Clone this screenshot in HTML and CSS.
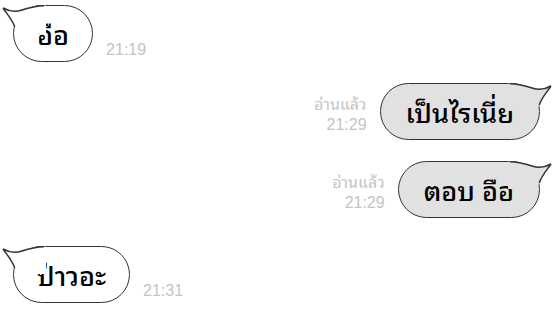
FILE: index.html
```html
<!DOCTYPE html>
<html lang="th">
<head>
    <meta charset="UTF-8">
    <meta name="viewport" content="width=device-width, initial-scale=1.0">
    <title>Chat</title>
    <link rel="stylesheet" href="styles.css">
</head>
<body>

    <main class="chat">

        <div class="row in">
            <div class="bubble">
                <svg class="tail" width="44" height="30" viewBox="0 0 44 30">
                    <path class="tail-fill" d="M42,0.8 C32,1 26,3 20,5 C14,7 8,7 1,3 C5,9 10,14 12.75,22 L16,28 L44,28 L44,0.8 Z"/>
                    <path class="tail-line" d="M42,0.8 C32,1 26,3 20,5 C14,7 8,7 1,3 C5,9 10,14 12.75,22"/>
                </svg>
                <p class="text">อือ</p>
            </div>
            <div class="meta">21:19</div>
        </div>

        <div class="row out">
            <div class="meta">อ่านแล้ว<br>21:29</div>
            <div class="bubble">
                <svg class="tail" width="44" height="30" viewBox="0 0 44 30">
                    <path class="tail-fill" d="M42,0.8 C32,1 26,3 20,5 C14,7 8,7 1,3 C5,9 10,14 12.75,22 L16,28 L44,28 L44,0.8 Z"/>
                    <path class="tail-line" d="M42,0.8 C32,1 26,3 20,5 C14,7 8,7 1,3 C5,9 10,14 12.75,22"/>
                </svg>
                <p class="text">เป็นไรเนี่ย</p>
            </div>
        </div>

        <div class="row out">
            <div class="meta">อ่านแล้ว<br>21:29</div>
            <div class="bubble">
                <svg class="tail" width="44" height="30" viewBox="0 0 44 30">
                    <path class="tail-fill" d="M42,0.8 C32,1 26,3 20,5 C14,7 8,7 1,3 C5,9 10,14 12.75,22 L16,28 L44,28 L44,0.8 Z"/>
                    <path class="tail-line" d="M42,0.8 C32,1 26,3 20,5 C14,7 8,7 1,3 C5,9 10,14 12.75,22"/>
                </svg>
                <p class="text">ตอบ อือ</p>
            </div>
        </div>

        <div class="row in last">
            <div class="bubble">
                <svg class="tail" width="44" height="30" viewBox="0 0 44 30">
                    <path class="tail-fill" d="M42,0.8 C32,1 26,3 20,5 C14,7 8,7 1,3 C5,9 10,14 12.75,22 L16,28 L44,28 L44,0.8 Z"/>
                    <path class="tail-line" d="M42,0.8 C32,1 26,3 20,5 C14,7 8,7 1,3 C5,9 10,14 12.75,22"/>
                </svg>
                <p class="text">ป่าวอะ</p>
            </div>
            <div class="meta">21:31</div>
        </div>

    </main>

</body>
</html>
```

FILE: styles.css
```css
*{
    margin: 0;padding: 0;
    box-sizing: border-box;
}

body{
    background: #fff;
    font-family: "Noto Sans Thai Looped", "Loma", sans-serif;
}

.chat{
    display: flex;
    flex-direction: column;
    gap: 21px;
    padding: 5px 17px 0 13px;
}

.row{
    display: flex;
    align-items: flex-end;
    gap: 13px;
}

.row.out{
    justify-content: flex-end;
}

.row.last{
    margin-top: 7px;
}

.bubble{
    position: relative;
    height: 57px;
    padding: 0 23px;
    color: #000;
    background: #fff;
    border: 1.5px solid #333;
    border-radius: 29px;
}

.text{
    font-size: 27px;
    font-weight: 500;
    line-height: 54px;
    white-space: nowrap;
}

.out .bubble{
    background: #e1e1e1;
    padding: 0 25px;
}

/* the little hook on top of each bubble */
.tail{
    position: absolute;
    top: -1.5px;
    left: -12.5px;
    overflow: visible;
}

.out .tail{
    left: auto;
    right: -12.5px;
    transform: scaleX(-1);
}

.tail-fill{ fill: #fff; }
.out .tail-fill{ fill: #e1e1e1; }

.tail-line{
    fill: none;
    stroke: #333;
    stroke-width: 1.5;
}

.meta{
    font-family: "Liberation Sans", "Noto Sans Thai Looped", sans-serif;
    font-size: 16px;
    line-height: 20px;
    color: #c4c4c4;
    margin-bottom: 2px;
    text-align: right;
}

.out .meta{
    margin-bottom: 5px;
}
```
